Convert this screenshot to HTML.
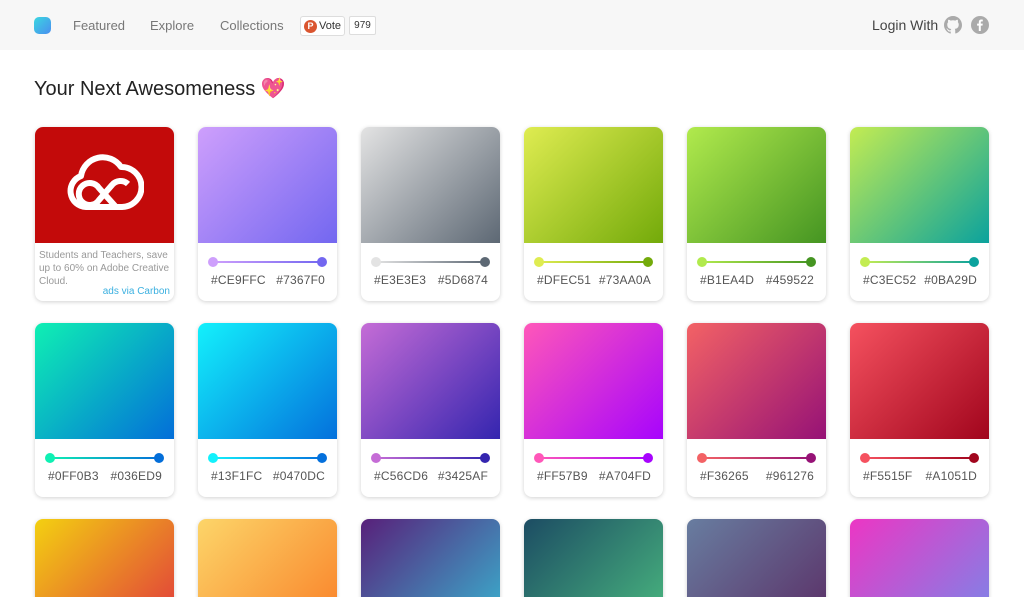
<!DOCTYPE html><html><head><meta charset="utf-8"><style>
*{box-sizing:border-box;margin:0;padding:0}
html{width:1024px;height:597px;overflow:hidden}
body{width:1024px;height:597px;overflow:hidden;background:#fff;font-family:"Liberation Sans",sans-serif;position:relative}
.hdr{position:absolute;left:0;top:0;width:1024px;height:50px;background:#f7f7f7}
.logo{position:absolute;left:34px;top:17px;width:17px;height:17px;border-radius:5px;background:linear-gradient(135deg,#3ad7e0,#4a8ef0)}
.nav{position:absolute;top:18px;font-size:13px;color:#777}
.ph{position:absolute;left:300px;top:16px;width:45px;height:20px;border:1px solid #ddd;border-radius:3px;background:#fff;font-size:11px;color:#333}
.ph i{position:absolute;left:3px;top:3px;width:13px;height:13px;border-radius:50%;background:#da552f;color:#fff;font-style:normal;font-size:9px;text-align:center;line-height:13px;font-weight:bold}
.ph span{position:absolute;left:18px;top:3px}
.cnt{position:absolute;left:349px;top:16px;width:27px;height:19px;border:1px solid #ddd;border-radius:2px;background:#fff;font-size:10px;color:#333;text-align:center;line-height:17px}
h1{position:absolute;left:34px;top:76px;font-weight:normal;font-size:20px;color:#222}
.card{position:absolute;width:139px;height:174px;border-radius:8px;background:#fff;box-shadow:0 1px 4px rgba(0,0,0,.18);overflow:hidden}
.g{height:116px}
.sl{position:absolute;left:14px;top:134px;width:111px;height:2px}
.d{position:absolute;top:-4px;width:10px;height:10px;border-radius:50%}
.t{position:absolute;top:146px;left:13px;right:12px;font-size:12px;color:#555;display:flex;justify-content:space-between;letter-spacing:.2px}
</style></head><body>
<div class="hdr"><div class="logo"></div>
<div class="nav" style="left:73px">Featured</div><div class="nav" style="left:150px">Explore</div><div class="nav" style="left:220px">Collections</div>
<div class="ph"><i>P</i><span>Vote</span></div><div class="cnt">979</div>
<div class="nav" style="left:872px;color:#444;font-size:14px;top:17px">Login With</div>
<svg style="position:absolute;left:944px;top:16px" width="18" height="18" viewBox="0 0 16 16"><path fill="#aaa" d="M8 0C3.6 0 0 3.6 0 8c0 3.5 2.3 6.5 5.5 7.6.4.1.5-.2.5-.4v-1.4c-2.2.5-2.7-1-2.7-1-.4-.9-.9-1.2-.9-1.2-.7-.5.1-.5.1-.5.8.1 1.2.8 1.2.8.7 1.2 1.9.9 2.3.7.1-.5.3-.9.5-1.1-1.8-.2-3.6-.9-3.6-4 0-.9.3-1.6.8-2.1-.1-.2-.4-1 .1-2.1 0 0 .7-.2 2.2.8.6-.2 1.3-.3 2-.3s1.4.1 2 .3c1.5-1 2.2-.8 2.2-.8.4 1.1.2 1.9.1 2.1.5.6.8 1.3.8 2.1 0 3.1-1.9 3.7-3.6 3.9.3.3.5.8.5 1.5v2.2c0 .2.1.5.6.4C13.7 14.5 16 11.5 16 8c0-4.4-3.6-8-8-8z"/></svg>
<svg style="position:absolute;left:971px;top:16px" width="18" height="18" viewBox="0 0 18 18"><circle cx="9" cy="9" r="9" fill="#aaa"/><path fill="#fff" d="M9.8 15V9.6h1.7l.3-2h-2V6.4c0-.6.2-1 1-1h1V3.6c-.2 0-.8-.1-1.5-.1-1.5 0-2.5.9-2.5 2.6v1.5H6.1v2h1.7V15z"/></svg>
</div>
<h1>Your Next Awesomeness 💖</h1>
<div class="card" style="left:35px;top:127px"><div class="g" style="background:#c30a0a;position:relative"><svg style="position:absolute;left:31px;top:27px" width="78" height="58" viewBox="0 0 78 58"><g fill="none" stroke="#fff" stroke-width="6" stroke-linejoin="round"><path d="M20 53 A16 16 0 0 1 15 22 A22 22 0 0 1 55 13 A20 20 0 0 1 56 53 Z"/><path d="M50 53 L33 34 A11 11 0 1 0 33 46 L46 31 A11 11 0 0 1 62 30"/></g></svg></div>
<div style="padding:6px 4px;font-size:10px;line-height:13px;color:#999">Students and Teachers, save up to 60% on Adobe Creative Cloud.</div>
<div style="position:absolute;right:4px;bottom:4px;font-size:10px;color:#3bb0e0">ads via Carbon</div></div>
<div id="cards"></div>
<script>
var d=[[1,0,"#CE9FFC","#7367F0"],[2,0,"#E3E3E3","#5D6874"],[3,0,"#DFEC51","#73AA0A"],[4,0,"#B1EA4D","#459522"],[5,0,"#C3EC52","#0BA29D"],
[0,1,"#0FF0B3","#036ED9"],[1,1,"#13F1FC","#0470DC"],[2,1,"#C56CD6","#3425AF"],[3,1,"#FF57B9","#A704FD"],[4,1,"#F36265","#961276"],[5,1,"#F5515F","#A1051D"],
[0,2,"#F3D011","#E0353E"],[1,2,"#FCD569","#F97E26"],[2,2,"#58207A","#38B7D2"],[3,2,"#1C4C63","#4BBB80"],[4,2,"#687DA0","#5A2C64"],[5,2,"#EC36C4","#7689EA"]];
var h="";d.forEach(function(c){var x=35+c[0]*163,y=127+c[1]*196;
h+='<div class="card" style="left:'+x+'px;top:'+y+'px"><div class="g" style="background:linear-gradient(135deg,'+c[2]+','+c[3]+')"></div><div class="sl" style="background:linear-gradient(90deg,'+c[2]+','+c[3]+')"><div class="d" style="left:-4px;background:'+c[2]+'"></div><div class="d" style="right:-4px;background:'+c[3]+'"></div></div><div class="t"><span>'+c[2]+'</span><span>'+c[3]+'</span></div></div>';});
document.getElementById("cards").innerHTML=h;
</script>
</body></html>
